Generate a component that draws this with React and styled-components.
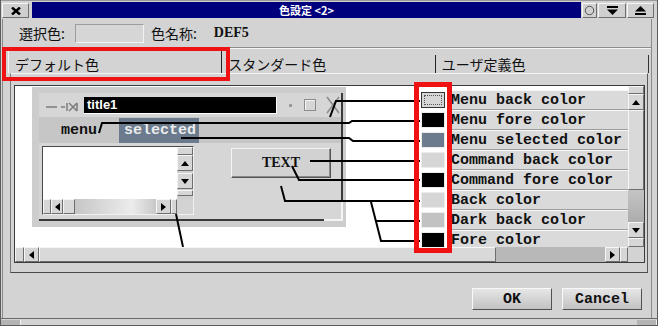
import React from 'react';
import styled, { createGlobalStyle, css } from 'styled-components';

const GREY = '#d3d3d3';
const MONO = '"Liberation Mono", "DejaVu Sans Mono", monospace';
const JP = '"Noto Sans CJK JP", "Noto Sans", sans-serif';

const GlobalStyle = createGlobalStyle`
  html, body { margin: 0; padding: 0; background: ${GREY}; }
  body { width: 658px; height: 326px; overflow: hidden; font-family: ${JP}; }
  *, *::before, *::after { box-sizing: border-box; }
`;

const raised = css`
  border: 1px solid;
  border-color: #f6f6f6 #6e6e6e #6e6e6e #f6f6f6;
`;

// Fenetre principale
const Window = styled.div`
  width: 658px;
  height: 326px;
  display: flex;
  flex-direction: column;
  background: ${GREY};
  box-shadow: inset 1px 0 #5c5c5c, inset -1px 0 #5c5c5c, inset 0 -1px #5c5c5c, inset 0 1px #9a9a9a;
`;

const TitleBar = styled.div`
  height: 19px;
  display: flex;
  padding: 2px 4px 1px 2px;
  gap: 1px;
`;

const CloseBtn = styled.div`
  ${raised};
  width: 27px;
  margin-top: 1px;
  display: flex;
  align-items: center;
  justify-content: center;
  background: #cfcfcf;
`;

const Caption = styled.div`
  flex: 1;
  margin-left: 2px;
  background: #00007c;
  color: #fff;
  font: bold 11px ${JP};
  display: flex;
  align-items: center;
  justify-content: center;
`;

const WinBtn = styled.div`
  ${raised};
  width: ${p => p.$w}px;
  margin-top: 1px;
  background: #d0d0d0;
  display: flex;
  align-items: center;
  justify-content: center;
`;

const Frame = styled.div`
  flex: 1;
  margin: 0 6px 0 2px;
  border-left: 1px solid #8a8a8a;
  border-right: 1px solid #8a8a8a;
  display: flex;
  flex-direction: column;
`;

const TopRow = styled.div`
  height: 28px;
  display: flex;
  align-items: center;
  padding-left: 16px;
  font-size: 14px;
  color: #111;
`;

const FieldLabel = styled.span`
  margin-left: ${p => p.$ml || 0}px;
  font-family: ${JP};
`;

const ColorField = styled.div`
  width: 69px;
  height: 19px;
  margin-left: 10px;
  margin-top: 1px;
  border: 1px solid;
  border-color: #9c9c9c #f2f2f2 #f2f2f2 #9c9c9c;
  background: #d6d6d6;
`;

const ColorName = styled.span`
  margin-left: 17px;
  font: bold 14px "Liberation Serif", serif;
`;

const Separator = styled.div`
  border-top: 1px solid #8c8c8c;
  border-bottom: 1px solid #f4f4f4;
`;

const Tabs = styled.div`
  display: flex;
  height: 23px;
  margin: 1px 2px 0 5px;
`;

const Tab = styled.div`
  position: relative;
  flex: 1;
  display: flex;
  align-items: flex-end;
  padding: 0 0 1px 6px;
  font: 14px/16px ${JP};
  color: #111;
  ${p => p.$active && css`
    border-top: 1px solid #f4f4f4;
    border-left: 1px solid #f4f4f4;
    border-right: 1px solid #222;
    &::after {
      content: '';
      position: absolute;
      left: -7px;
      top: -4px;
      width: 228px;
      height: 34px;
      border: 4px solid #f01212;
      z-index: 5;
    }
  `}
  ${p => p.$last && css`
    margin-top: 5px;
    padding-bottom: 1px;
    border-left: 1px solid #222;
    border-right: 1px solid #333;
  `}
`;

const Panel = styled.div`
  height: 200px;
  margin: 0 3px 0 7px;
  padding: 11px 2px 9px 3px;
  display: flex;
  border: 1px solid;
  border-color: #f4f4f4 #5a5a5a #4a4a4a #7a7a7a;
`;

const Scrolled = styled.div`
  position: relative;
  flex: 1;
  display: grid;
  grid-template-columns: 1fr 16px;
  grid-template-rows: 1fr 15px;
  border: 1px solid #3c3c3c;
`;

const Canvas = styled.div`
  position: relative;
  overflow: hidden;
  background: #fff;
`;

const Highlight = styled.div`
  position: absolute;
  left: 399px;
  top: -4px;
  width: 38px;
  height: 171px;
  border: 5px solid #f01212;
  z-index: 5;
`;

// Barres de defilement
const ScrollBar = styled.div`
  display: flex;
  flex-direction: ${p => (p.$vertical ? 'column' : 'row')};
  background: #cfcfcf;
`;

const arrows = {
  up: css`border-left: 4px solid transparent; border-right: 4px solid transparent; border-bottom: 5px solid #000;`,
  down: css`border-left: 4px solid transparent; border-right: 4px solid transparent; border-top: 5px solid #000;`,
  left: css`border-top: 4px solid transparent; border-bottom: 4px solid transparent; border-right: 5px solid #000;`,
  right: css`border-top: 4px solid transparent; border-bottom: 4px solid transparent; border-left: 5px solid #000;`,
};

const ScrollBtn = styled.div`
  ${raised};
  flex: 0 0 ${p => p.$s}px;
  background: #d6d6d6;
  display: flex;
  align-items: center;
  justify-content: center;
  &::after {
    content: '';
    box-sizing: content-box;
    ${p => (p.$dir ? arrows[p.$dir] : 'display: none;')}
  }
`;

const Thumb = styled.div`
  ${raised};
  flex: 0 0 ${p => p.$s}px;
  background: #d9d9d9;
`;

const Trough = styled.div`
  flex: 1;
  background: ${p => p.$bg || 'linear-gradient(#c4c4c4, #acacac)'};
`;

const Corner = styled.div`
  background: ${GREY};
`;

// Fenetre miniature (apercu)
const MiniWin = styled.div`
  position: absolute;
  left: 17px;
  top: 1px;
  width: 314px;
  height: 140px;
  padding: 6px 3px 6px 7px;
  background: #cdcdcd;
`;

const MiniFrame = styled.div`
  position: relative;
  height: 100%;
  display: flex;
  flex-direction: column;
  background: #d6d6d6;
  border-right: 2px solid #3a3a3a;
  border-bottom: 2px solid #3a3a3a;
`;

const Grip = styled.div`
  position: absolute;
  right: -2px;
  bottom: -2px;
  width: 19px;
  height: 19px;
  border-right: 2px solid #f4f4f4;
  border-bottom: 2px solid #f4f4f4;
`;

const MiniTitleRow = styled.div`
  height: 24px;
  display: flex;
  align-items: center;
  padding-left: 7px;
`;

const MiniTitle = styled.div`
  width: 193px;
  height: 17px;
  margin-left: 5px;
  padding-left: 3px;
  background: #000;
  border-right: 1px solid #fff;
  border-bottom: 1px solid #fff;
  color: #fff;
  font: bold 13px/16px "Liberation Sans", Arial, sans-serif;
`;

const Dot = styled.div`
  width: 3px;
  height: 3px;
  margin-left: 12px;
  background: #9a9a9a;
`;

const MaxBox = styled.div`
  width: 12px;
  height: 12px;
  margin-left: 12px;
  border: 1px solid #8c8c8c;
  box-shadow: inset 1px 1px #f4f4f4;
`;

const MenuRow = styled.div`
  height: 26px;
  display: flex;
  align-items: center;
  background: #c6c6c6;
  font: bold 15px ${MONO};
`;

const MenuItem = styled.span`
  margin-left: 22px;
  width: 58px;
  color: #111;
`;

const MenuSelected = styled.span`
  height: 25px;
  width: 80px;
  padding-left: 5px;
  display: flex;
  align-items: center;
  background: #6b7a8c;
  color: #ececec;
`;

const MiniBody = styled.div`
  flex: 1;
  display: flex;
  align-items: flex-start;
`;

const ListBox = styled.div`
  width: 152px;
  height: 69px;
  margin: 3px 0 0 3px;
  display: grid;
  grid-template-columns: 1fr 16px;
  grid-template-rows: 1fr 15px;
  border: 1px solid;
  border-color: #4a4a4a #f0f0f0 #f0f0f0 #4a4a4a;
  background: #cfcfcf;
`;

const ListArea = styled.div`
  background: #fff;
`;

const CommandBtn = styled.div`
  width: 100px;
  height: 30px;
  margin: 5px 0 0 37px;
  display: flex;
  align-items: center;
  justify-content: center;
  background: #d2d2d2;
  border: 1px solid;
  border-color: #f4f4f4 #555 #555 #f4f4f4;
  box-shadow: inset -1px -1px #8a8a8a;
  font: bold 14px "Liberation Serif", serif;
  color: #111;
`;

// Liste des couleurs
const ColorList = styled.div`
  position: absolute;
  left: 405px;
  top: 4px;
  right: 0;
  display: flex;
  flex-direction: column;
`;

const ColorRow = styled.div`
  height: 20px;
  display: flex;
  align-items: center;
`;

const Swatch = styled.div`
  width: 24px;
  height: 16px;
  margin-left: 1px;
  background: ${p => p.$color};
  border: 1px solid ${p => (p.$focus ? '#333' : '#ececec')};
  outline: ${p => (p.$focus ? '1px dotted #555' : 'none')};
  outline-offset: -4px;
`;

const ColorLabel = styled.div`
  flex: 1;
  height: 20px;
  margin-left: 4px;
  padding-left: 2px;
  display: flex;
  align-items: center;
  background: #dadada;
  border-top: 1px solid #f6f6f6;
  border-bottom: 1px solid #9e9e9e;
  font: bold 15px ${MONO};
  color: #111;
  white-space: nowrap;
`;

const Leaders = styled.svg`
  position: absolute;
  left: 0;
  top: 0;
  z-index: 3;
`;

const ButtonRow = styled.div`
  flex: 1;
  display: flex;
  justify-content: flex-end;
  align-items: flex-start;
  gap: 10px;
  padding: 15px 9px 0 0;
`;

const PushBtn = styled.div`
  width: 80px;
  height: 22px;
  display: flex;
  align-items: center;
  justify-content: center;
  background: linear-gradient(#e6e6e6, #c2c2c2);
  border: 1px solid;
  border-color: #f8f8f8 #505050 #505050 #f8f8f8;
  font: bold 15px ${MONO};
  color: #111;
`;

const StatusBar = styled.div`
  height: 8px;
  display: flex;
  justify-content: space-between;
  border-top: 1px solid #6a6a6a;
  padding: 1px;
`;

const StatusCell = styled.div`
  width: ${p => p.$w}px;
  background: #b4b4b4;
  border-right: 1px solid #f0f0f0;
`;

const colors = [
  { label: 'Menu back color', color: '#d6d6d6', focus: true },
  { label: 'Menu fore color', color: '#000' },
  { label: 'Menu selected color', color: '#6c7b8d' },
  { label: 'Command back color', color: '#d6d6d6' },
  { label: 'Command fore color', color: '#000' },
  { label: 'Back color', color: '#d6d6d6' },
  { label: 'Dark back color', color: '#c2c2c2' },
  { label: 'Fore color', color: '#000' },
];

const leaderPaths = [
  'M331 117 L337 101 L421 101',
  'M100 133 L103 123 L350 123 L353 121 L421 121',
  'M182 138 L350 138 L354 141 L421 141',
  'M311 161 L421 161',
  'M293 166 L300 180 L421 180',
  'M282 186 L286 201 L421 201',
  'M372 202 L382 241 L421 241',
  'M377 221 L421 221',
  'M177 214 L184 247',
];

const PinIcon = () => (
  <svg width="33" height="12" viewBox="0 0 33 12" style={{ marginTop: 4 }}>
    <g stroke="#7c7c7c" strokeWidth="1.5" fill="none">
      <path d="M0 6 H11 M15 6 H19" />
      <path d="M21 2 V10 M23 2 L31 10 M23 10 L31 2 M31 2 V10" />
    </g>
  </svg>
);

const App = () => (
  <>
    <GlobalStyle />
    <Window>
      <TitleBar>
        <CloseBtn>
          <svg width="10" height="8" viewBox="0 0 10 8">
            <path d="M1 0.5 L9 7.5 M9 0.5 L1 7.5" stroke="#000" strokeWidth="2.4" />
          </svg>
        </CloseBtn>
        <Caption>色設定 &lt;2&gt;</Caption>
        <WinBtn $w={15}>
          <svg width="11" height="11" viewBox="0 0 11 11">
            <circle cx="5.5" cy="5.5" r="4.2" stroke="#555" fill="none" />
          </svg>
        </WinBtn>
        <WinBtn $w={28}>
          <svg width="11" height="9" viewBox="0 0 11 9">
            <rect x="0" y="0" width="11" height="2" fill="#000" />
            <path d="M0 3.5 H11 L5.5 9 Z" fill="#000" />
          </svg>
        </WinBtn>
        <WinBtn $w={27}>
          <svg width="11" height="9" viewBox="0 0 11 9">
            <path d="M0 5.5 H11 L5.5 0 Z" fill="#000" />
            <rect x="0" y="7" width="11" height="2" fill="#000" />
          </svg>
        </WinBtn>
      </TitleBar>

      <Frame>
        <TopRow>
          <FieldLabel>選択色:</FieldLabel>
          <ColorField />
          <FieldLabel $ml={7}>色名称:</FieldLabel>
          <ColorName>DEF5</ColorName>
        </TopRow>
        <Separator />

        <Tabs>
          <Tab $active>デフォルト色</Tab>
          <Tab>スタンダード色</Tab>
          <Tab $last>ユーザ定義色</Tab>
        </Tabs>

        <Panel>
          <Scrolled>
            <Canvas>
              <MiniWin>
                <MiniFrame>
                  <MiniTitleRow>
                    <PinIcon />
                    <MiniTitle>title1</MiniTitle>
                    <Dot />
                    <MaxBox />
                    <svg width="14" height="18" viewBox="0 0 14 18" style={{ marginLeft: 10 }}>
                      <path d="M1 1 L13 17 M13 1 L1 17" stroke="#8a8a8a" strokeWidth="1.5" />
                    </svg>
                  </MiniTitleRow>
                  <MenuRow>
                    <MenuItem>menu</MenuItem>
                    <MenuSelected>selected</MenuSelected>
                  </MenuRow>
                  <MiniBody>
                    <ListBox>
                      <ListArea />
                      <ScrollBar $vertical>
                        <ScrollBtn $s={8} />
                        <ScrollBtn $s={16} $dir="up" />
                        <ScrollBtn $s={16} $dir="down" style={{ marginTop: 2 }} />
                        <ScrollBtn $s={6} style={{ marginTop: 1 }} />
                      </ScrollBar>
                      <ScrollBar>
                        <ScrollBtn $s={8} />
                        <ScrollBtn $s={12} $dir="left" />
                        <Thumb $s={12} />
                        <Trough $bg="linear-gradient(90deg, #c6c6c6, #ececec 70%, #c8c8c8)" />
                        <ScrollBtn $s={15} $dir="right" />
                        <ScrollBtn $s={6} />
                      </ScrollBar>
                      <Corner />
                    </ListBox>
                    <CommandBtn>TEXT</CommandBtn>
                  </MiniBody>
                  <Grip />
                </MiniFrame>
              </MiniWin>

              <ColorList>
                {colors.map(c => (
                  <ColorRow key={c.label}>
                    <Swatch $color={c.color} $focus={c.focus} />
                    <ColorLabel>{c.label}</ColorLabel>
                  </ColorRow>
                ))}
              </ColorList>

              <Leaders width="611" height="161" viewBox="16 86 611 161">
                {leaderPaths.map(d => (
                  <path key={d} d={d} stroke="#000" strokeWidth="2" fill="none" />
                ))}
              </Leaders>
            </Canvas>

            <ScrollBar $vertical>
              <ScrollBtn $s={8} />
              <ScrollBtn $s={16} $dir="up" />
              <Thumb $s={80} />
              <Trough />
              <ScrollBtn $s={16} $dir="down" />
              <ScrollBtn $s={9} />
            </ScrollBar>
            <ScrollBar>
              <ScrollBtn $s={9} />
              <ScrollBtn $s={15} $dir="left" />
              <Thumb $s={457} />
              <Trough $bg="#b8b8b8" />
              <ScrollBtn $s={15} $dir="right" />
              <ScrollBtn $s={8} />
            </ScrollBar>
            <Corner />
            <Highlight />
          </Scrolled>
        </Panel>

        <ButtonRow>
          <PushBtn>OK</PushBtn>
          <PushBtn>Cancel</PushBtn>
        </ButtonRow>
      </Frame>

      <StatusBar>
        <StatusCell $w={20} />
        <StatusCell $w={20} />
      </StatusBar>
    </Window>
  </>
);

export default App;
